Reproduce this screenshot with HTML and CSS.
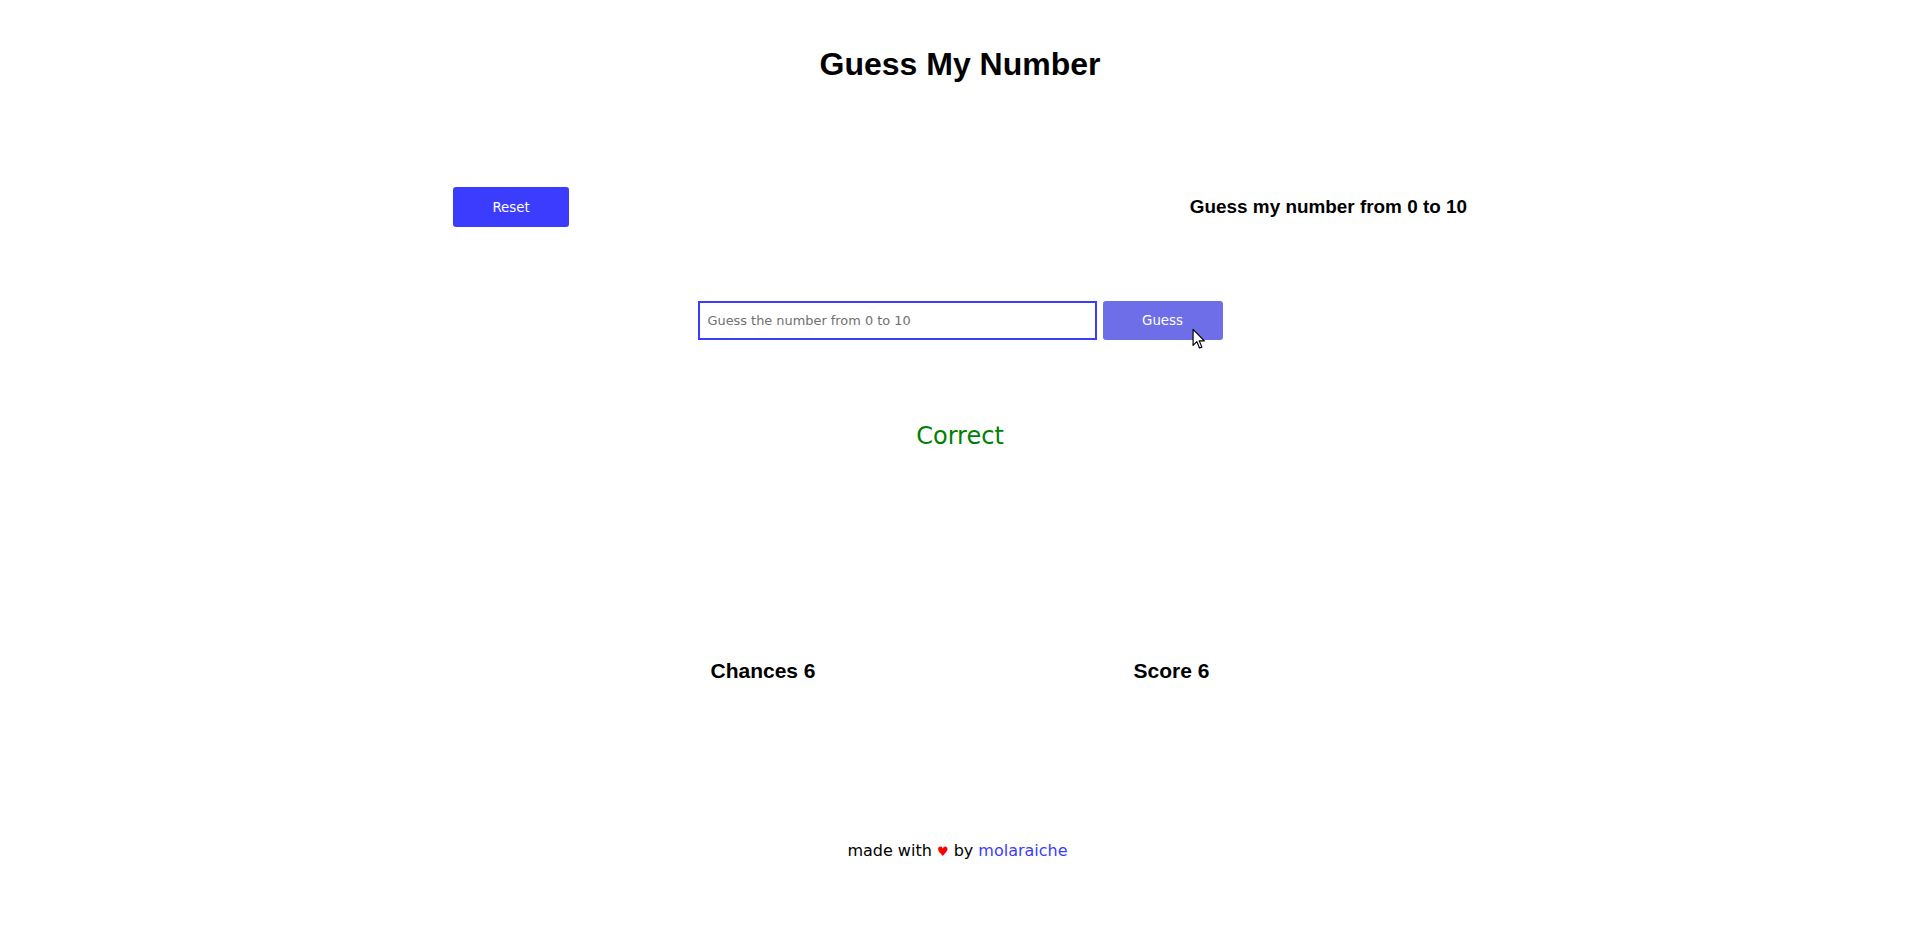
FILE: index.html
```html
<!DOCTYPE html>
<html lang="en">
<head>
<meta charset="utf-8">
<title>Guess My Number</title>
<link rel="stylesheet" href="styles.css">
</head>
<body>
<main class="page">
  <h1 class="title">Guess My Number</h1>

  <div class="top-row">
    <button class="btn btn-reset" type="button">Reset</button>
    <h3 class="hint">Guess my number from 0 to 10</h3>
  </div>

  <div class="guess-row">
    <input class="guess-input" type="text" placeholder="Guess the number from 0 to 10">
    <button class="btn btn-guess" type="button">Guess
      <svg class="cursor" width="15" height="23" viewBox="0 0 14 21"><path d="M1 1 L1 16 L4.5 12.5 L7 18.5 L9.2 17.6 L6.8 11.8 L11.5 11.8 Z" fill="#fff" stroke="#000" stroke-width="1.1" stroke-linejoin="round"/></svg>
    </button>
  </div>

  <p class="result">Correct</p>

  <div class="stats">
    <h3 class="stat">Chances 6</h3>
    <h3 class="stat">Score 6</h3>
  </div>

  <footer class="footer">made with <span class="heart">&#9829;</span> by <a class="author" href="#">molaraiche</a></footer>
</main>
</body>
</html>
```

FILE: styles.css
```css
html, body {
  margin: 0;
  padding: 0;
  background: #ffffff;
}

body {
  font-family: "DejaVu Sans", "Liberation Sans", sans-serif;
  color: #000;
}

.page {
  display: flex;
  flex-direction: column;
  align-items: center;
}

.title {
  margin: 40px 0 0;
  font-family: "Liberation Sans", Arial, sans-serif;
  font-weight: 700;
  font-size: 32px;
  line-height: 48px;
  color: #000;
}

.top-row {
  width: 1014px;
  margin-top: 99px;
  height: 40px;
  display: flex;
  align-items: center;
  justify-content: space-between;
}

.btn {
  border: none;
  border-radius: 3px;
  color: #fff;
  font-family: "DejaVu Sans", sans-serif;
  font-size: 13.33px;
  height: 40px;
  padding: 0;
  cursor: pointer;
}

.btn-reset {
  width: 116px;
  background: #3c3cff;
}

.hint {
  margin: 0;
  font-family: "Liberation Sans", Arial, sans-serif;
  font-weight: 700;
  font-size: 18.9px;
  line-height: 24px;
}

.guess-row {
  margin-top: 74px;
  display: flex;
  gap: 6px;
  width: 525px;
}

.guess-input {
  box-sizing: border-box;
  width: 399px;
  height: 39px;
  border: 2px solid #3c3cff;
  border-radius: 0;
  padding: 0 8px;
  font-family: "DejaVu Sans", sans-serif;
  font-size: 12.9px;
  color: #000;
  outline: none;
}

.guess-input::placeholder {
  color: #707070;
}

.btn-guess {
  position: relative;
  width: 120px;
  height: 39px;
  background: #6e6ee8;
}

.cursor {
  position: absolute;
  left: 89px;
  top: 27px;
}

.result {
  margin: 81px 0 0;
  font-family: "DejaVu Sans", sans-serif;
  font-size: 24px;
  line-height: 30px;
  color: #008000;
}

.stats {
  margin-top: 208px;
  width: 525px;
  box-sizing: border-box;
  padding: 0 13px 0 13px;
  display: flex;
  justify-content: space-between;
}

.stat {
  margin: 0;
  font-family: "Liberation Sans", Arial, sans-serif;
  font-weight: 700;
  font-size: 21px;
  line-height: 24px;
}

.footer {
  margin-top: 158px;
  padding-right: 5px;
  font-size: 16px;
  line-height: 20px;
  color: #000;
}

.heart {
  color: #ff0000;
  font-size: 13px;
}

.author {
  color: #3c3cff;
  text-decoration: none;
}
```
